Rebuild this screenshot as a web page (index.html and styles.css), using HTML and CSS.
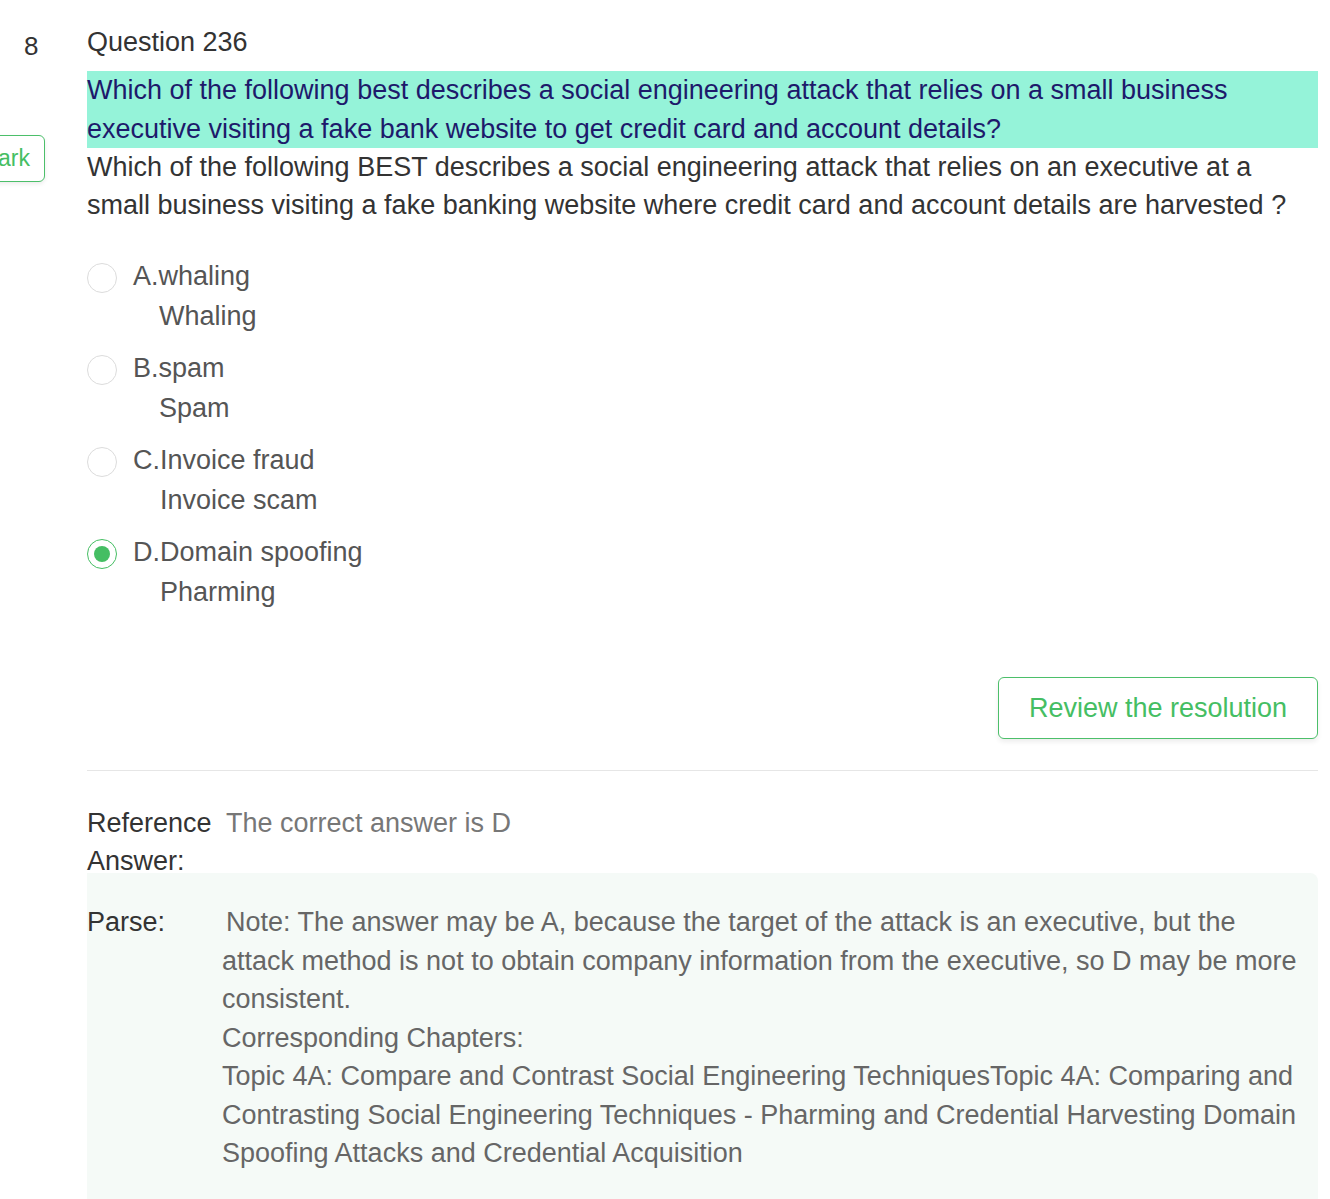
FILE: index.html
```html
<!DOCTYPE html>
<html lang="en">
<head>
<meta charset="utf-8">
<title>Question 236</title>
<link rel="stylesheet" href="styles.css">
</head>
<body>
<div class="page">
  <aside class="side">
    <div class="qnum">8</div>
    <button class="mark-btn">Mark</button>
  </aside>
  <main class="main">
    <div class="qtitle">Question 236</div>
    <div class="qhighlight">Which of the following best describes a social engineering attack that relies on a small business executive visiting a fake bank website to get credit card and account details?</div>
    <div class="qtext">Which of the following BEST describes a social engineering attack that relies on an executive at a small business visiting a fake banking website where credit card and account details are harvested ?</div>

    <div class="options">
      <div class="option">
        <span class="radio"></span>
        <div class="opt-body">
          <div class="opt-label">A.whaling</div>
          <div class="opt-sub">Whaling</div>
        </div>
      </div>
      <div class="option">
        <span class="radio"></span>
        <div class="opt-body">
          <div class="opt-label">B.spam</div>
          <div class="opt-sub">Spam</div>
        </div>
      </div>
      <div class="option">
        <span class="radio"></span>
        <div class="opt-body">
          <div class="opt-label">C.Invoice fraud</div>
          <div class="opt-sub sub-wide">Invoice scam</div>
        </div>
      </div>
      <div class="option">
        <span class="radio checked"></span>
        <div class="opt-body">
          <div class="opt-label">D.Domain spoofing</div>
          <div class="opt-sub sub-wide">Pharming</div>
        </div>
      </div>
    </div>

    <div class="actions">
      <button class="review-btn">Review the resolution</button>
    </div>

    <div class="divider"></div>

    <div class="ref-row">
      <div class="ref-label">Reference Answer:</div>
      <div class="ref-value">The correct answer is D</div>
    </div>

    <div class="parse">
      <div class="parse-label">Parse:</div>
      <div class="parse-text">
        <div class="first">Note: The answer may be A, because the target of the attack is an executive, but the attack method is not to obtain company information from the executive, so D may be more consistent.</div>
        <div>Corresponding Chapters:</div>
        <div>Topic 4A: Compare and Contrast Social Engineering TechniquesTopic 4A: Comparing and Contrasting Social Engineering Techniques - Pharming and Credential Harvesting Domain Spoofing Attacks and Credential Acquisition</div>
      </div>
    </div>
  </main>
</div>
</body>
</html>
```

FILE: styles.css
```css
html, body {
  margin: 0;
  padding: 0;
  background: #ffffff;
}
body {
  font-family: "Liberation Sans", Arial, sans-serif;
  color: #333333;
  overflow: hidden;
  width: 1330px;
  height: 1199px;
}
.page {
  display: flex;
  align-items: flex-start;
}
.side {
  width: 87px;
  flex: none;
  display: flex;
  flex-direction: column;
}
.qnum {
  font-size: 26px;
  line-height: 38px;
  margin-top: 27px;
  padding-left: 24px;
  color: #333;
}
.mark-btn {
  margin-top: 70px;
  margin-left: -35px;
  width: 80px;
  height: 47px;
  box-sizing: border-box;
  border: 1px solid #4cbf6a;
  border-radius: 6px;
  background: #fff;
  color: #45be63;
  font-family: "Liberation Sans", Arial, sans-serif;
  font-size: 23px;
  text-align: right;
  padding: 0 14px 0 0;
  box-shadow: 0 2px 4px rgba(0, 0, 0, 0.08);
}
.main {
  width: 1231px;
  flex: none;
  font-size: 27px;
}
.qtitle {
  line-height: 38px;
  margin-top: 23px;
  color: #333;
}
.qhighlight {
  margin-top: 10px;
  background: #95f3d9;
  color: #1d1a6b;
  line-height: 38.5px;
}
.qtext {
  line-height: 38px;
  color: #333;
}
.options {
  margin-top: 32px;
  display: flex;
  flex-direction: column;
  gap: 12px;
}
.option {
  display: flex;
  align-items: flex-start;
  color: #555;
}
.radio {
  flex: none;
  width: 30px;
  height: 30px;
  box-sizing: border-box;
  border: 1px solid #dcdcdc;
  border-radius: 50%;
  margin-top: 7px;
  margin-right: 16px;
  display: flex;
  align-items: center;
  justify-content: center;
}
.radio.checked {
  border-color: #45be63;
}
.radio.checked::after {
  content: "";
  width: 16px;
  height: 16px;
  border-radius: 50%;
  background: #45be63;
}
.opt-label {
  line-height: 40px;
}
.opt-sub {
  line-height: 40px;
  padding-left: 26px;
}
.opt-sub.sub-wide {
  padding-left: 27px;
}
.actions {
  display: flex;
  justify-content: flex-end;
  margin-top: 65px;
}
.review-btn {
  width: 320px;
  height: 62px;
  box-sizing: border-box;
  border: 1px solid #4cbf6a;
  border-radius: 6px;
  background: #fff;
  color: #45be63;
  font-family: "Liberation Sans", Arial, sans-serif;
  font-size: 27px;
  padding: 0;
  box-shadow: 0 3px 5px rgba(0, 0, 0, 0.07);
}
.divider {
  margin-top: 31px;
  height: 1px;
  background: #e6e6e6;
}
.ref-row {
  margin-top: 33px;
  display: flex;
  line-height: 38px;
}
.ref-label {
  width: 139px;
  flex: none;
  color: #333;
}
.ref-value {
  color: #777;
}
.parse {
  margin-top: -7px;
  background: #f5faf7;
  border-radius: 0 8px 0 0;
  display: flex;
  padding: 30px 20px 40px 0;
  line-height: 38.5px;
  min-height: 400px;
}
.parse-label {
  width: 135px;
  flex: none;
  color: #333;
}
.parse-text {
  color: #666;
}
.parse-text .first {
  text-indent: 4px;
}
```
